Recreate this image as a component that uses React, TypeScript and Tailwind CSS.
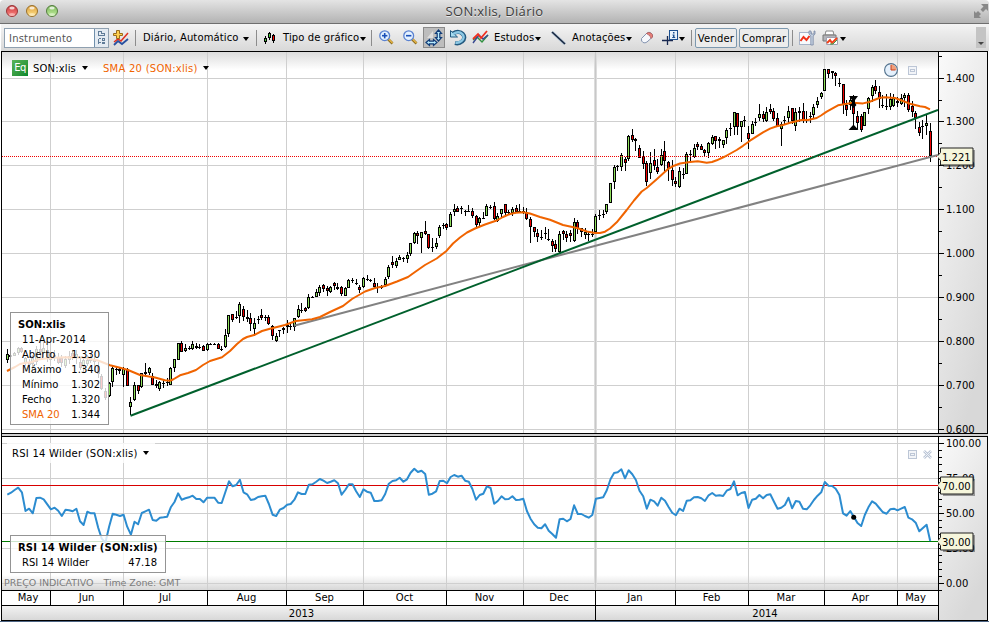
import React from "react";

type Row = [number, number, number, number, number];

/* Candles: high, body top, body bottom, low (thirds of a pixel under `base`), 1 = up / 0 = down */
const SEGMENTS: { start: number; base: number; rows: Row[] }[] = [
  {
    start: 0,
    base: 290,
    rows: [
      [177,193,210,219,1],[186,195,201,205,1],[186,188,198,198,1],[172,175,190,195,1],[172,175,187,190,0],
      [200,205,219,228,1],[207,215,225,240,0],[195,205,222,240,1],[168,177,216,225,1],[150,177,186,198,0],
      [156,175,188,200,1],[165,180,205,215,0],[150,186,210,228,1],[180,195,205,212,0],[189,200,219,222,0],
      [195,205,219,231,0],[198,207,228,234,1],[183,198,210,222,1],[180,189,204,210,0],[180,192,201,222,1],
      [200,215,234,240,0],[201,210,228,246,1],[195,210,222,228,1],[190,204,213,219,0],[198,207,216,246,0],
      [216,228,252,264,0],[252,258,297,300,0],[293,302,325,330,0],[275,278,318,321,1],[228,234,276,290,1],
      [230,237,240,255,0],[230,238,243,252,0],[232,237,254,290,1],[235,237,288,288,0],[322,335,350,376,1],
      [275,286,330,333,1],[284,286,302,312,0],[249,249,291,293,1],[220,246,252,262,1],[230,235,248,254,1],
      [250,258,285,285,0],[270,283,287,295,0],[272,275,296,302,1],[270,278,282,293,0],[265,275,278,287,0],
      [232,233,284,285,1],[207,208,235,245,1],[158,160,209,210,1],[152,160,185,185,0],[163,175,183,186,1],
      [168,173,173,180,0],[153,162,178,180,1],[160,168,173,178,0],[162,171,171,178,0],[165,168,182,183,0],
      [160,163,180,182,1],[158,162,162,165,0],[158,162,162,165,0],[160,162,176,178,0],[168,176,176,183,0],
      [118,135,170,173,1],[75,76,133,140,1],[72,73,90,95,0],
    ],
  },
  {
    start: 63,
    base: 200,
    rows: [
      [332,350,350,358,0],[307,313,347,368,1],[317,328,350,363,0],[330,350,356,365,0],[340,355,372,392,0],
      [355,370,386,408,1],[348,356,356,372,0],[327,345,354,360,0],[345,350,350,362,0],[345,350,373,375,0],
      [375,379,408,420,0],[400,408,423,425,1],[390,391,391,410,0],[380,385,391,403,0],[360,374,382,398,1],
      [365,377,377,390,0],[353,355,380,393,1],[315,328,352,355,1],[308,330,330,340,0],[320,323,332,335,0],
      [282,292,325,327,1],[289,292,292,295,0],[267,275,290,290,1],[255,262,278,287,1],[253,254,266,277,0],
      [258,265,273,288,0],[258,262,276,280,1],[245,250,257,270,0],[250,262,268,270,0],[258,260,282,287,0],
      [262,263,287,287,1],[237,240,263,265,1],[234,241,241,250,0],[238,250,250,255,0],[255,262,269,280,0],
      [230,235,262,265,1],[225,237,241,243,0],[238,241,241,247,0],[235,250,261,263,0],[250,262,262,278,0],
      [255,262,262,268,0],[232,238,256,262,1],[195,200,231,237,1],[168,187,195,203,0],[175,183,198,205,1],
      [165,172,179,180,1],[170,175,178,187,0],[157,165,177,188,1],[130,130,161,167,1],[97,100,129,132,1],
      [93,98,109,132,0],
    ],
  },
  {
    start: 114,
    base: 180,
    rows: [
      [157,157,173,218,1],[123,154,163,165,0],[162,163,203,208,0],[175,201,201,215,0],[175,190,200,207,1],
      [135,140,167,173,1],[130,134,134,147,0],[128,133,143,150,0],[95,102,140,142,1],[72,87,96,108,1],
      [77,85,95,95,0],[78,83,86,103,0],[90,93,93,107,0],[75,93,93,95,0],[83,93,108,115,0],
      [105,108,134,140,0],[110,115,128,142,1],[95,113,113,115,0],[72,77,107,108,1],[75,81,81,88,0],
      [65,78,118,120,0],[98,108,123,127,1],[87,88,103,113,1],[72,73,100,105,0],[90,97,97,105,0],
      [82,86,98,107,1],[75,85,97,98,0],[73,92,96,98,0],[80,92,92,103,0],[85,97,118,120,0],
      [112,118,141,188,0],[142,142,157,172,0],[147,158,170,187,0],[150,170,170,180,0],[140,160,163,178,0],
      [148,177,177,182,0],[177,183,198,215,0],[180,193,207,217,0],[152,162,216,218,1],[150,154,163,180,0],
      [153,162,173,185,0],[150,160,169,187,0],[113,127,182,187,1],[120,127,143,162,0],[143,145,157,170,0],
      [143,155,166,177,1],[153,163,163,183,0],
    ],
  },
  {
    start: 161,
    base: 100,
    rows: [
      [388,402,404,412,0],[343,347,396,397,1],[330,345,345,360,0],[330,342,342,355,0],[312,313,336,342,1],
      [250,250,310,310,1],[195,200,245,268,1],[195,198,198,213,0],[158,165,201,212,1],[172,178,189,212,0],
      [105,107,177,182,1],[87,105,119,127,0],[115,117,124,152,0],[135,145,173,175,0],[152,167,193,207,0],
      [183,190,246,257,0],[157,190,218,238,1],[147,181,197,210,0],[178,200,216,222,0],[147,165,194,198,1],
      [123,154,183,213,0],[182,185,206,242,0],[180,210,241,257,0],[230,243,252,262,0],[202,213,261,263,1],
      [205,223,226,237,0],[155,163,221,222,1],[150,163,163,185,0],[132,143,172,173,1],[127,133,142,150,0],
      [132,137,150,150,0],[147,150,159,168,0],[127,128,159,173,1],[105,110,132,135,1],[107,108,123,147,0],
      [112,118,122,145,0],[120,121,134,143,1],[83,90,115,132,1],[68,85,88,108,0],[37,37,81,105,1],
      [38,40,81,105,0],[62,63,81,125,1],[48,60,63,82,0],[78,98,117,147,0],[63,72,101,102,1],
      [53,67,67,77,0],[12,42,53,62,1],[33,43,58,67,0],[22,37,64,65,1],
    ],
  },
  {
    start: 210,
    base: 55,
    rows: [
      [147,162,170,177,0],[160,167,193,198,0],[175,190,213,217,0],[200,208,223,272,1],[182,195,198,208,0],
      [153,167,188,203,1],[158,160,198,208,0],[160,170,214,228,1],[157,168,173,200,0],[145,168,194,203,0],
      [167,195,198,205,0],[170,184,186,203,0],[148,155,180,193,1],[125,137,149,160,1],[110,115,127,133,1],
      [42,43,107,107,1],[42,43,56,70,0],[47,48,55,72,0],[50,53,64,92,0],[68,83,83,95,0],
      [87,88,150,178,0],[135,150,165,182,0],[125,136,150,165,1],[120,145,177,210,0],[168,183,204,222,0],
      [177,182,225,230,0],[170,170,213,213,1],[127,130,163,178,1],[90,97,122,142,1],[75,93,107,117,0],
      [93,110,131,158,0],[120,150,150,160,0],[117,152,152,165,0],[115,132,156,165,1],[118,130,154,157,1],
      [127,137,145,155,0],[117,130,146,150,1],[115,120,129,155,1],[115,120,164,172,0],[137,153,171,185,0],
      [168,175,190,222,0],[200,215,234,243,0],[195,212,212,252,0],[180,205,214,240,1],[205,228,303,320,0],
    ],
  },
];

/* RSI samples, thirds of a pixel under y = 430 */
const RSI = [
  194,188,180,173,187,243,236,250,204,203,208,223,238,233,242,258,239,241,244,236,274,285,245,250,250,293,326,338,290,251,
  254,258,254,290,314,275,283,249,244,239,270,272,263,262,260,232,216,190,209,205,202,197,207,207,217,203,203,203,218,219,
  187,154,169,165,149,187,193,210,208,201,199,197,222,254,258,239,234,224,222,209,187,192,192,164,163,155,147,152,159,155,
  151,160,194,180,163,163,184,201,178,185,188,213,213,211,192,161,153,151,143,155,148,128,116,126,122,132,194,191,184,153,
  152,160,141,135,140,137,152,155,177,209,195,191,169,174,221,213,199,208,207,199,210,209,206,243,266,283,293,295,283,302,
  312,323,268,266,274,267,226,252,252,258,263,255,206,204,202,181,148,129,127,118,145,121,133,150,182,199,236,209,214,227,
  203,212,231,248,256,236,243,212,211,202,201,205,213,196,189,197,196,198,182,177,154,196,189,186,234,209,206,195,205,195,
  193,215,236,233,225,203,235,213,215,236,238,226,210,197,187,156,167,168,176,195,250,257,243,261,279,288,255,232,214,221,
  234,247,251,238,236,241,236,231,263,268,278,304,294,284,333,
];

const SMA =
  "7,371 15,367 20,364 25,363 32,362 38,359.5 50,358 65,357.3 82,357.5 98,360.5 110,365.3 120,367.7 128,370 140,375 155,377.5 165,380.3 170,380.7 173,379.5 180,375.3 188,373 196,370 203,365 210,361 222,357.3 230,351 237,344 243,339 247,337 255,334.7 262,331 270,328.7 285,325 296,321 312,319.3 320,317 330,312 343,306 352,299 365,291.5 375,288 385,286 397,281.5 408,277 415,272 425,265 436.7,258.5 446.7,250.7 453,243.5 460,237.5 467,232.5 475,228.5 485,224.5 496.7,220.5 503,217 510,214 516,212.8 523,212.3 530,213.5 540,217 550,219.7 563,225 577,228 587,231.5 595,233 600,233 605,231.7 610,228.5 616.7,222.3 626.7,210 634,200.5 641.7,191.5 646.7,188 657,179 668,169 674,165.7 680,163.5 690,162 697.7,161.2 706.7,162.7 712,162 716.7,160.3 725,156.5 736.7,150 743,145.8 750,140.7 763,132.3 770,128.6 776.7,126.3 783,125 790,122.8 801.7,120 808,120 816.7,118 821,115.5 826.7,111.7 838,105.3 853,102.7 863,103.4 869,102 880,97.8 885,97.3 895,98 903,101 910,103.8 920,106.3 925,107 930,109.3";

const VLINES = [50, 123, 207, 286, 363, 446, 523, 675, 748, 824, 897];
const xOf = (n: number) => Math.floor((22 + 10.9 * n) / 3);

function Candles() {
  return (
    <g shapeRendering="crispEdges">
      {SEGMENTS.flatMap((s) =>
        s.rows.map((r, i) => {
          const n = s.start + i;
          const x = xOf(n);
          const y = (v: number) => s.base + Math.round(v / 3);
          const [hi, top, bot, lo, up] = r;
          const h = Math.max(1, y(bot) - y(top));
          return (
            <g key={n}>
              <rect x={x} y={y(hi)} width={1} height={Math.max(1, y(lo) - y(hi))} fill="#000" />
              <rect x={x - 1} y={y(top)} width={3} height={h} fill="#000" />
              {h > 2 && <rect x={x} y={y(top) + 1} width={1} height={h - 2} fill={up ? "#8fe05c" : "#f00000"} />}
            </g>
          );
        })
      )}
    </g>
  );
}

function VGrid({ y, h }: { y: number; h: number }) {
  return (
    <g>
      {VLINES.map((x) => (
        <rect key={x} x={x} y={y} width={1} height={h} fill="#cfcfcf" />
      ))}
      <rect x={594} y={y} width={3} height={h} fill="#dcdcdc" />
      <rect x={595} y={y} width={1} height={h} fill="#c8c8c8" />
    </g>
  );
}

function Arrow({ className = "" }: { className?: string }) {
  return (
    <svg className={"shrink-0 " + className} width="6" height="4" viewBox="0 0 6 4">
      <path d="M0 0h6L3 4z" fill="#000" />
    </svg>
  );
}

function Sep({ className = "" }: { className?: string }) {
  return <span className={"h-4 w-px shrink-0 bg-[#8c8c8c] " + className} />;
}

function Magnifier({ plus, className }: { plus?: boolean; className: string }) {
  return (
    <svg className={"shrink-0 " + className} width="15" height="15" viewBox="0 0 15 15">
      <path d="M9 9l4.5 4.5" stroke="#8a6a1c" strokeWidth="2.6" />
      <path d="M9.5 9l4 4" stroke="#e8b648" strokeWidth="1.4" />
      <circle cx="5.7" cy="5.7" r="4.9" fill="#e4f1ff" stroke="#5b82d0" strokeWidth="1.3" />
      <path d="M3 5.7h5.4" stroke="#1c50b8" strokeWidth="1.6" />
      {plus && <path d="M5.7 3v5.4" stroke="#1c50b8" strokeWidth="1.6" />}
    </svg>
  );
}

function Light({ id, a, b, c }: { id: string; a: string; b: string; c: string }) {
  return (
    <svg width="12" height="12" viewBox="0 0 12 12">
      <defs>
        <linearGradient id={id} x1="0" y1="0" x2="0" y2="1">
          <stop offset="0" stopColor={a} />
          <stop offset="1" stopColor={b} />
        </linearGradient>
      </defs>
      <circle cx="6" cy="6" r="5.5" fill={"url(#" + id + ")"} stroke={c} strokeWidth="1" />
      <ellipse cx="6" cy="2.9" rx="2.7" ry="1.5" fill="#fff" opacity=".75" />
      <ellipse cx="6" cy="9.4" rx="3" ry="1.5" fill="#fff" opacity=".4" />
    </svg>
  );
}

function TitleBar() {
  return (
    <div className="relative flex h-6 shrink-0 items-center justify-center rounded-t-sm border-b border-[#6e6e6e] bg-linear-to-b from-[#e4e4e4] to-[#b3b3b3]">
      <div className="absolute top-[5px] left-1.5 flex gap-2">
        <Light id="lr" a="#c8343a" b="#ff8a84" c="#98383a" />
        <Light id="ly" a="#dc9c38" b="#ffe48c" c="#98702c" />
        <Light id="lg" a="#78b458" b="#c4f0a0" c="#547c40" />
      </div>
      <span className="font-['Open_Sans',sans-serif] text-[13px] leading-none tracking-[0.3px] whitespace-nowrap text-[#3c3c3c] [text-shadow:0_1px_0_#e8e8e8]">
        SON:xlis, Diário
      </span>
      <svg className="absolute top-1 right-[1px]" width="14" height="14" viewBox="0 0 14 14" fill="#888">
        <path d="M7 0h7v7l-2-2-3 3-2.500-2.500 3-3zM0 14V7l2 2 2-2 3 3-2 2 2 2z" />
      </svg>
    </div>
  );
}

function Toolbar() {
  return (
    <div className="ml-px flex h-[27px] shrink-0 items-center bg-linear-to-b from-[#f4f4f4] to-[#d8d8d8] text-[10px] leading-none tracking-[0.12px] whitespace-nowrap">
      <div className="ml-[3px] flex h-5 w-[105px] shrink-0 border border-[#8fa0b0] bg-white">
        <span className="flex w-[89px] items-center pt-0.5 pl-1 tracking-[0.2px] text-[#555]">Instrumento</span>
        <span className="flex flex-1 items-center justify-center border-l border-[#7090ac] bg-[#e4ebf2]">
          <svg width="9" height="14" viewBox="0 0 9 14" fill="none" stroke="#607c98" shapeRendering="crispEdges">
            <path d="M1.500 4.500v-4h3v2h3v2zM1.500 7.500v5M1.500 7.500h2M1.500 11.500h2" />
            <rect x="5.500" y="7.500" width="2" height="2" />
            <rect x="5.500" y="11.500" width="2" height="1" />
          </svg>
        </span>
      </div>
      <svg className="ml-[3px] shrink-0" width="18" height="18" viewBox="0 0 18 18">
        <path d="M2 16l4-4 4 3 6-5" fill="none" stroke="#2850a0" strokeWidth="1.800" />
        <path d="M2 13l4-3 3 2 7-8" fill="none" stroke="#e03020" strokeWidth="1.500" />
        <path d="M4.500 1.500h3v3h3v2h-3v3h-3v-3h-3v-2h3z" fill="#ffd050" stroke="#906010" strokeWidth=".9" />
      </svg>
      <Sep className="ml-[5px]" />
      <span className="ml-[7px] w-[97px] shrink-0 pt-px">Diário, Automático</span>
      <Arrow className="ml-[3px] mt-[3px]" />
      <Sep className="ml-[7px]" />
      <svg className="ml-[7px] shrink-0" width="12" height="12" viewBox="0 0 12 12" shapeRendering="crispEdges">
        <path d="M1 4h1v8H1zM5 0h1v8H5zM9 2h1v9H9z" />
        <path d="M0 6h3v4H0zM4 1h3v5H4zM8 3h3v6H8z" />
        <path d="M1 7h1v2H1zM5 2h1v3H5z" fill="#50d040" />
        <path d="M9 4h1v4H9z" fill="#f00" />
      </svg>
      <span className="ml-[7px] w-[75px] shrink-0 pt-px">Tipo de gráfico</span>
      <Arrow className="ml-[2px] mt-[3px]" />
      <Sep className="ml-[5px]" />
      <Magnifier plus className="ml-[7px]" />
      <Magnifier className="ml-[9px]" />
      <span className="ml-[5px] flex h-[21px] w-[22px] shrink-0 items-center justify-center border border-[#8a8a8a] bg-[#bdbdbd]">
        <svg width="18" height="18" viewBox="0 0 18 18">
          <path d="M2 9l6-7v7z" fill="#ddd" />
          <path d="M13.500 1l3 3.500h-1.700v4h1.700l-3 3.500-3-3.500h1.700v-4h-1.700z" fill="#b8ecff" stroke="#103c78" strokeWidth="1.200" />
          <path d="M1 13.500L4.500 10.500v1.700h4v-1.700l3.500 3-3.500 3v-1.700h-4v1.700z" fill="#b8ecff" stroke="#103c78" strokeWidth="1.200" />
        </svg>
      </span>
      <svg className="ml-[4px] shrink-0" width="18" height="17" viewBox="0 0 18 17">
        <path d="M4 4.500C12-.5 19 8 13 12.500c-2 1.800-5 2-7 1.500" fill="none" stroke="#235a80" strokeWidth="4.200" />
        <path d="M1.500 1.500v6.500h7z" fill="#a8dcf0" stroke="#235a80" />
        <path d="M4 5C12 0 18 8 12.500 12c-2 1.500-4 2-6 1.500" fill="none" stroke="#8cc8e4" strokeWidth="2.400" />
      </svg>
      <svg className="ml-[5px] shrink-0" width="17" height="15" viewBox="0 0 17 15">
        <path d="M1 10l4-3 5 5 6-7" fill="none" stroke="#309040" strokeWidth="1.400" />
        <path d="M1 13l6-8 4 4 5-4" fill="none" stroke="#384890" strokeWidth="1.400" />
        <path d="M1 9l5-5 3 4 6-7" fill="none" stroke="#f03020" strokeWidth="1.800" />
      </svg>
      <span className="ml-[5px] w-[40px] shrink-0 pt-px">Estudos</span>
      <Arrow className="ml-[1px] mt-[3px]" />
      <svg className="ml-[10px] shrink-0" width="15" height="14" viewBox="0 0 15 14">
        <path d="M1 1l13 12" stroke="#90b0d0" strokeWidth="3" opacity=".5" />
        <path d="M1 1l13 12" stroke="#182840" strokeWidth="1.700" />
      </svg>
      <span className="ml-[6px] w-[53px] shrink-0 pt-px">Anotações</span>
      <Arrow className="ml-px mt-[3px]" />
      <svg className="ml-[8px] shrink-0" width="14" height="13" viewBox="0 0 14 13">
        <path d="M1.500 7.500L7 2q2-1.500 4 0t1.500 4L7 11q-2 1.500-4 .5t-1.500-4z" fill="#f6f8fc" stroke="#8494b0" />
        <path d="M6.500 2.500q2-1.800 4.300-.5t1.700 4L11 7.500q0-3-4.500-5z" fill="#e88078" stroke="#b05858" strokeWidth=".8" />
      </svg>
      <svg className="ml-[7px] shrink-0" width="18" height="17" viewBox="0 0 18 17">
        <path d="M6.500 7v9M1 11.500h11" stroke="#182850" strokeWidth="1.300" />
        <rect x="8.500" y="1.500" width="8" height="9" fill="#e8f2fc" stroke="#1c5090" />
        <path d="M12 3h1.500v1.500H12zM11.500 5.500h2V8h.7v1h-3V8h.8V6.500h-.5z" fill="#1c5090" />
      </svg>
      <Arrow className="mt-[3px]" />
      <Sep className="ml-[6px]" />
      <span className="ml-[3px] flex h-5 w-[42px] shrink-0 items-center justify-center rounded-[2px] border border-[#7c98ae] bg-[#ececec] pt-0.5 tracking-[0.2px]">
        Vender
      </span>
      <span className="ml-[2px] flex h-5 w-[50px] shrink-0 items-center justify-center rounded-[2px] border border-[#7c98ae] bg-[#ececec] pt-0.5 tracking-[0.1px]">
        Comprar
      </span>
      <Sep className="ml-[3px]" />
      <svg className="ml-[6px] shrink-0" width="17" height="16" viewBox="0 0 17 16">
        <rect x=".5" y="2.500" width="12" height="12" fill="#f8fafc" stroke="#a8b4c8" />
        <path d="M1.500 11l3-4 3 3 3-4" fill="none" stroke="#f03018" strokeWidth="2" />
        <path d="M10 1v3l1.800 2V15h2.400V6L16 4V1h-1v3h-3V1z" fill="#c4d0e0" stroke="#7888a4" strokeWidth=".8" />
      </svg>
      <svg className="ml-[6px] shrink-0" width="17" height="16" viewBox="0 0 17 16">
        <path d="M3 5l1-4h7l1 4z" fill="#fff" stroke="#888" />
        <path d="M1 5h13v6H1z" fill="#b4b4b8" stroke="#777" />
        <path d="M4.500 7.500h11v7h-11z" fill="#fff" stroke="#a0a0b0" />
        <path d="M5 13l3-3 2 3 5-5" fill="none" stroke="#f04018" strokeWidth="2" />
        <path d="M8 14h3l4-4" fill="none" stroke="#40a040" />
      </svg>
      <Arrow className="ml-px mt-[3px]" />
      <span className="mr-[3px] ml-auto flex h-[21px] w-[10px] shrink-0 items-end justify-center bg-[#c4c4c4] pb-[3px]">
        <svg width="6" height="3" viewBox="0 0 6 3">
          <path d="M0 0h6L3 3z" fill="#444" />
        </svg>
      </span>
    </div>
  );
}

function InfoRow({ k, v, c }: { k: string; v: string; c?: string }) {
  return (
    <div className="flex h-[15px] items-center justify-between pr-2 pl-[11px]">
      <span className={c}>{k}</span>
      <span>{v}</span>
    </div>
  );
}

function Restore() {
  return (
    <svg width="9" height="9" viewBox="0 0 9 9" fill="#f2f4f8" stroke="#bcc6d6" shapeRendering="crispEdges">
      <rect x=".5" y=".5" width="8" height="8" />
      <rect x="2.500" y="3.500" width="4" height="2" />
    </svg>
  );
}

function PricePanel() {
  return (
    <div className="relative h-[381px] shrink-0">
      <svg className="block" width="936" height="381" viewBox="2 52 936 381">
        <defs>
          <linearGradient id="topShade" x1="0" y1="0" x2="0" y2="1">
            <stop offset="0" stopColor="#dcdcdc" />
            <stop offset="1" stopColor="#fff" />
          </linearGradient>
        </defs>
        <rect x="2" y="52" width="936" height="381" fill="#fff" />
        <rect x="2" y="52" width="936" height="18" fill="url(#topShade)" />
        {[78, 121, 165, 209, 253, 297, 341, 385, 429].map((y) => (
          <rect key={y} x="2" y={y} width="936" height="1" fill="#cfcfcf" />
        ))}
        <VGrid y={52} h={381} />
        <Candles />
        <path d="M2 156.500H938" stroke="#f00000" strokeDasharray="1 1" shapeRendering="crispEdges" />
        <path d="M294 325.700L938 155" stroke="#828282" strokeWidth="2" />
        <path d="M130.500 415.700L938 110" stroke="#00602c" strokeWidth="2" />
        <polyline points={SMA} fill="none" stroke="#f06400" strokeWidth="2" strokeLinejoin="round" />
        <path d="M849 96h9l-3 4v3l1.500 2-3 3-3-3 1.500-2v-3zM848.500 130l5-5.500 5 5.500z" />
      </svg>
      <div className="absolute top-[8px] left-[10px] flex h-4 items-center whitespace-nowrap">
        <span className="flex h-4 w-4 items-center justify-center bg-linear-to-br from-[#58b458] to-[#00882c] text-[10px] tracking-tighter text-white">
          Eq
        </span>
        <span className="ml-[5px] w-[44px] pt-0.5 tracking-[0.15px]">SON:xlis</span>
        <Arrow className="ml-[5px]" />
        <span className="ml-[15px] w-[95px] pt-0.5 tracking-[0.25px] text-[#f06400]">SMA 20 (SON:xlis)</span>
        <Arrow className="ml-[5px]" />
      </div>
      <div className="absolute top-[11px] right-[21px] flex items-center gap-[10px]">
        <svg width="14" height="14" viewBox="0 0 14 14">
          <circle cx="7" cy="7" r="6.400" fill="#e4f0fc" stroke="#50708c" strokeWidth="1.100" />
          <path d="M7 7V1.300A5.700 5.700 0 0 1 12.700 7z" fill="#f0a07c" />
          <path d="M7 2v5h4.500" fill="none" stroke="#c83c18" />
        </svg>
        <Restore />
      </div>
      <div className="absolute top-[260px] left-[8px] h-[113px] w-[99px] border border-[#949494] bg-white/80 pt-1">
        <div className="flex h-[15px] items-center pt-px pl-[7px] font-bold">SON:xlis</div>
        <div className="flex h-[15px] items-center pl-[11px] tracking-[0.2px]">11-Apr-2014</div>
        <InfoRow k="Aberto" v="1.330" />
        <InfoRow k="Máximo" v="1.340" />
        <InfoRow k="Mínimo" v="1.302" />
        <InfoRow k="Fecho" v="1.320" />
        <InfoRow k="SMA 20" v="1.344" c="text-[#f06400]" />
      </div>
    </div>
  );
}

function RsiPanel() {
  const pts = RSI.map((v, i) => `${((22 + 10.9 * i) / 3).toFixed(1)},${(430 + v / 3).toFixed(1)}`).join(" ");
  return (
    <div className="relative h-[153px] shrink-0">
      <svg className="block" width="936" height="153" viewBox="2 437 936 153">
        <defs>
          <linearGradient id="botShade" x1="0" y1="0" x2="0" y2="1">
            <stop offset="0" stopColor="#fff" />
            <stop offset="1" stopColor="#d6d6d6" />
          </linearGradient>
        </defs>
        <rect x="2" y="437" width="936" height="153" fill="#fff" />
        <rect x="2" y="575" width="936" height="15" fill="url(#botShade)" />
        {[443, 478, 513, 548, 583].map((y) => (
          <rect key={y} x="2" y={y} width="936" height="1" fill="#cfcfcf" />
        ))}
        <VGrid y={437} h={153} />
        <rect x="2" y="485" width="936" height="1" fill="#d80000" />
        <rect x="2" y="541" width="936" height="1" fill="#007c00" />
        <polyline points={pts} fill="none" stroke="#2c8cd0" strokeWidth="2" strokeLinejoin="round" />
        <circle cx="853.700" cy="517.300" r="2.500" />
      </svg>
      <div className="absolute top-[6px] left-[5px] flex h-[20px] w-[148px] items-center bg-white/80 pl-[5px] whitespace-nowrap">
        <span className="w-[126px] pt-0.5 tracking-[0.24px]">RSI 14 Wilder (SON:xlis)</span>
        <Arrow className="ml-[5px]" />
      </div>
      <div className="absolute top-[13px] right-[6px] flex items-center gap-[6px]">
        <Restore />
        <svg width="9" height="9" viewBox="0 0 9 9">
          <path d="M1 1l7 7M8 1L1 8" stroke="#bcc6d6" strokeWidth="2.600" />
          <path d="M1 1l7 7M8 1L1 8" stroke="#eef2f8" />
        </svg>
      </div>
      <div className="absolute top-[98px] left-[8px] h-[38px] w-[156px] border border-[#949494] bg-white/80 pt-1">
        <div className="flex h-[15px] items-center pt-px pl-[7px] font-bold tracking-[0.15px] whitespace-nowrap">RSI 14 Wilder (SON:xlis)</div>
        <InfoRow k="RSI 14 Wilder" v="47.18" />
      </div>
      <div className="absolute top-[140px] left-[2px] flex h-3 items-center gap-[10px] text-[9.500px] tracking-[-0.05px] whitespace-nowrap text-[#7c7c7c]">
        <span>PREÇO INDICATIVO</span>
        <span className="tracking-[-0.1px]">Time Zone: GMT</span>
      </div>
    </div>
  );
}

function TimeAxis() {
  const cell = "flex shrink-0 items-center justify-center border-r border-black ";
  return (
    <>
      <div className="flex h-4 shrink-0 border-y border-black bg-white">
        <span className={cell + "w-[49px] pl-1"}>May</span>
        <span className={cell + "w-[73px] pr-px"}>Jun</span>
        <span className={cell + "w-[84px] pr-px"}>Jul</span>
        <span className={cell + "w-[79px] pr-px"}>Aug</span>
        <span className={cell + "w-[77px] pr-px"}>Sep</span>
        <span className={cell + "w-[83px] pr-px"}>Oct</span>
        <span className={cell + "w-[77px] pr-px"}>Nov</span>
        <span className={cell + "w-[72px] pr-px"}>Dec</span>
        <span className={cell + "w-[80px] pr-px"}>Jan</span>
        <span className={cell + "w-[73px] pr-px"}>Feb</span>
        <span className={cell + "w-[76px] pr-px"}>Mar</span>
        <span className={cell + "w-[73px] pr-px"}>Apr</span>
        <span className="flex flex-1 items-center justify-center pr-[5px]">May</span>
      </div>
      <div className="flex h-[14px] shrink-0 bg-linear-to-b from-[#f2f2f2] to-[#d8d8d8]">
        <span className={cell + "w-[594px] pt-0.5 pl-1.5"}>2013</span>
        <span className="flex flex-1 items-center justify-center pt-0.5 pr-1">2014</span>
      </div>
    </>
  );
}

function Tag({ y, label }: { y: number; label: string }) {
  return (
    <g>
      <rect x="943" y={y - 6} width="32" height="17" fill="#000" opacity=".35" />
      <path d={`M937 ${y + 0.5}L940.500 ${y - 3.5}V${y - 8}H973V${y + 9}H940.500V${y + 4.5}z`} fill="#f6f6dc" stroke="#202020" />
      <text x="942" y={y + 5}>{label}</text>
    </g>
  );
}

function ValueAxis() {
  const major = [78, 121, 165, 209, 253, 297, 341, 385, 429];
  const minor = [56, 100, 143, 187, 231, 275, 319, 363, 407];
  const rsiTicks = Array.from({ length: 21 }, (_, i) => 443 + i * 7);
  return (
    <svg className="block shrink-0" width="50" height="568" viewBox="938 52 50 568" fontSize="10">
      <defs>
        <linearGradient id="axA" x1="0" y1="0" x2=".5" y2="1">
          <stop offset="0" stopColor="#fafafa" />
          <stop offset="1" stopColor="#d8d8d8" />
        </linearGradient>
      </defs>
      <rect x="938" y="52" width="50" height="381" fill="url(#axA)" />
      <rect x="938" y="437" width="50" height="183" fill="url(#axA)" />
      <g shapeRendering="crispEdges">
        <rect x="938" y="52" width="1" height="568" />
        <rect x="987" y="52" width="1" height="568" />
        {major.map((y) => <rect key={y} x="938" y={y} width="6" height="1" />)}
        {minor.map((y) => <rect key={y} x="938" y={y} width="4" height="1" />)}
        {rsiTicks.map((y, i) => <rect key={i} x="938" y={y} width={i % 5 === 0 ? 6 : 4} height="1" />)}
        <rect x="938" y="590" width="4" height="1" />
      </g>
      {major.map((y, i) => (
        <text key={y} x="946" y={y + 4}>{((14 - i) / 10).toFixed(3)}</text>
      ))}
      {["100.00", "75.00", "50.00", "25.00", "0.00"].map((t, i) => (
        <text key={t} x="946" y={443 + i * 35 + 4}>{t}</text>
      ))}
      <rect x="938" y="433" width="50" height="4" fill="#000" />
      <rect x="938" y="434" width="50" height="2" fill="#d0d0d0" />
      <Tag y={156} label="1.221" />
      <Tag y={485} label="70.00" />
      <Tag y={541} label="30.00" />
    </svg>
  );
}

export default function App() {
  return (
    <div className="flex h-[624px] w-[989px] flex-col overflow-hidden bg-white font-['DejaVu_Sans',Verdana,sans-serif] text-[10px] leading-none text-black">
      <TitleBar />
      <Toolbar />
      <div className="ml-px flex h-[570px] w-[987px] shrink-0 border-y border-l border-black">
        <div className="flex w-[936px] shrink-0 flex-col">
          <PricePanel />
          <div className="h-1 shrink-0 border-y border-black bg-[#d0d0d0]" />
          <RsiPanel />
          <TimeAxis />
        </div>
        <ValueAxis />
      </div>
      <div className="h-px shrink-0 bg-[#4c6484]" />
    </div>
  );
}
